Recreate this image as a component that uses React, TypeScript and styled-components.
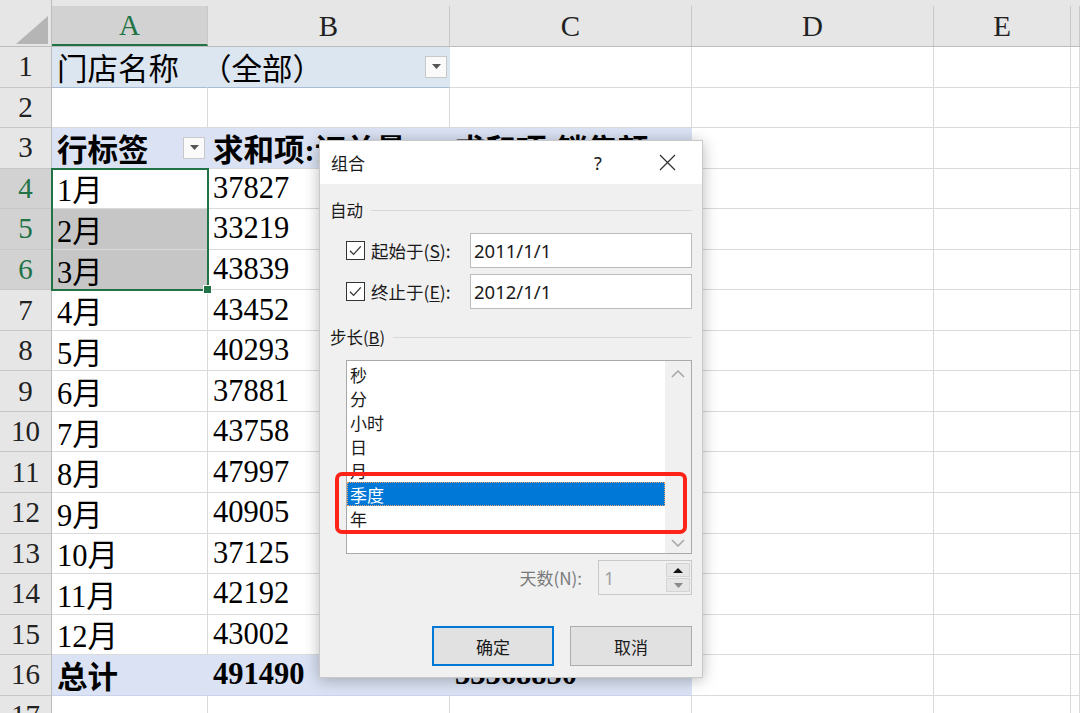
import React from "react";
import styled, { createGlobalStyle } from "styled-components";

const GlobalStyle = createGlobalStyle`
  html, body { margin: 0; padding: 0; background: #fff; overflow: hidden; }
  body { width: 1080px; height: 713px; }
`;

const COLS = [156, 242, 242, 242, 137, 9];
const LETTERS = ["A", "B", "C", "D", "E", ""];

const months = [
  ["1月", "37827"], ["2月", "33219"], ["3月", "43839"], ["4月", "43452"],
  ["5月", "40293"], ["6月", "37881"], ["7月", "43758"], ["8月", "47997"],
  ["9月", "40905"], ["10月", "37125"], ["11月", "42192"], ["12月", "43002"],
];

const Page = styled.div`
  position: relative;
  width: 1080px;
  height: 713px;
  overflow: hidden;
  font-family: "Liberation Serif", "Noto Sans CJK SC", serif;
  color: #000;
`;

const Sheet = styled.div`
  display: flex;
  flex-direction: column;
`;

const HeadRow = styled.div`
  display: flex;
  height: 47px;
  flex-shrink: 0;
  background: #e6e6e6;
  box-sizing: border-box;
  border-bottom: 1px solid #bdbdbd;
`;

const Corner = styled.div`
  width: 52px;
  flex-shrink: 0;
  display: flex;
  align-items: flex-end;
  justify-content: flex-end;
  padding: 0 3px 2px 0;
  box-sizing: border-box;
  border-right: 1px solid #bdbdbd;
`;

const ColHead = styled.div<{ $w: number; $active?: boolean }>`
  width: ${(p) => p.$w}px;
  flex-shrink: 0;
  height: 40px;
  align-self: flex-end;
  box-sizing: border-box;
  display: flex;
  align-items: center;
  justify-content: center;
  font-size: 29px;
  border-right: 1px solid #c8c8c8;
  background: ${(p) => (p.$active ? "#d2d2d2" : "transparent")};
  color: ${(p) => (p.$active ? "#217346" : "#222")};
  border-bottom: ${(p) => (p.$active ? "2px solid #217346" : "none")};
`;

const Row = styled.div`
  display: flex;
  height: 40.55px;
  flex-shrink: 0;
`;

const RowHead = styled.div<{ $active?: boolean }>`
  width: 52px;
  flex-shrink: 0;
  box-sizing: border-box;
  display: flex;
  align-items: center;
  justify-content: center;
  font-size: 29px;
  background: ${(p) => (p.$active ? "#d2d2d2" : "#e6e6e6")};
  color: ${(p) => (p.$active ? "#217346" : "#222")};
  border-right: 1px solid #bdbdbd;
  border-bottom: 1px solid #c6c6c6;
`;

const Cell = styled.div<{ $w: number; $bg?: string; $bold?: boolean; $line?: string }>`
  width: ${(p) => p.$w}px;
  flex-shrink: 0;
  box-sizing: border-box;
  display: flex;
  align-items: center;
  justify-content: space-between;
  padding: 0 2px 0 5px;
  font-size: 30.5px;
  font-weight: ${(p) => (p.$bold ? 700 : 400)};
  white-space: nowrap;
  overflow: visible;
  background: ${(p) => p.$bg ?? "#fff"};
  border-right: 1px solid ${(p) => (p.$bg ? p.$bg : "#dadada")};
  border-bottom: 1px solid ${(p) => p.$line ?? "#dadada"};
  position: relative;
`;

/* full-width bracket carries its own left bearing; pull it back to the cell edge */
const FilterValue = styled.span`
  margin-left: -12px;
`;

const DropBtn = styled.div`
  width: 22px;
  height: 22px;
  flex-shrink: 0;
  box-sizing: border-box;
  background: #fafafa;
  border: 1px solid #c8c8c8;
  display: flex;
  align-items: center;
  justify-content: center;
`;

const Selection = styled.div`
  position: absolute;
  left: 51px;
  top: 168px;
  width: 158px;
  height: 123px;
  box-sizing: border-box;
  border: 2px solid #217346;
  pointer-events: none;
`;

const FillHandle = styled.div`
  position: absolute;
  right: -5px;
  bottom: -5px;
  width: 7px;
  height: 7px;
  background: #217346;
  border: 1px solid #fff;
`;

/* dialog */
const Dialog = styled.div`
  position: absolute;
  left: 319px;
  top: 140px;
  width: 384px;
  height: 538px;
  box-sizing: border-box;
  background: #f0f0f0;
  border: 1px solid #c9c9c9;
  box-shadow: 0 2px 14px rgba(0, 0, 0, 0.28);
  display: flex;
  flex-direction: column;
  font-family: "Noto Sans CJK SC", "Noto Sans", sans-serif;
  color: #1a1a1a;
`;

const TitleBar = styled.div`
  height: 43px;
  flex-shrink: 0;
  background: #fff;
  display: flex;
  align-items: center;
  padding: 0 0 0 11px;
  font-size: 17px;
`;

const Title = styled.div`
  flex: 1;
`;

const Help = styled.div`
  width: 40px;
  text-align: center;
  font-family: "Noto Sans", sans-serif;
  font-size: 18px;
  margin-right: 19px;
`;

const Close = styled.div`
  width: 60px;
  display: flex;
  justify-content: center;
  margin-right: 5px;
`;

const Body = styled.div`
  position: relative;
  display: flex;
  flex-direction: column;
  padding: 0 10px 0 10px;
  flex: 1;
`;

const GroupHead = styled.div<{ $mt: number }>`
  display: flex;
  align-items: center;
  gap: 8px;
  height: 20px;
  margin-top: ${(p) => p.$mt}px;
  font-size: 16.5px;
  &::after {
    content: "";
    flex: 1;
    height: 1px;
    background: #d8d8d8;
  }
`;

const CheckRow = styled.div<{ $mt: number }>`
  display: flex;
  align-items: center;
  height: 35px;
  margin-top: ${(p) => p.$mt}px;
  padding-left: 16px;
`;

const CheckLabel = styled.label`
  display: flex;
  align-items: center;
  gap: 6px;
  width: 124px;
  font-size: 17.5px;
  u { text-underline-offset: 2px; }
`;

const TextInput = styled.div`
  width: 222px;
  height: 35px;
  box-sizing: border-box;
  background: #fff;
  border: 1px solid #bcbcbc;
  display: flex;
  align-items: center;
  padding-left: 3px;
  font-family: "Noto Sans", sans-serif;
  font-size: 18.5px;
`;

const ListBox = styled.div`
  margin: 13px 0 0 16px;
  width: 346px;
  height: 194px;
  box-sizing: border-box;
  background: #fff;
  border: 1px solid #a9a9a9;
  display: flex;
`;

const Items = styled.div`
  flex: 1;
  padding-top: 1px;
  display: flex;
  flex-direction: column;
`;

const Item = styled.div<{ $sel?: boolean }>`
  height: 24px;
  display: flex;
  align-items: center;
  padding-left: 3px;
  font-size: 17px;
  background: ${(p) => (p.$sel ? "#0078d7" : "transparent")};
  color: ${(p) => (p.$sel ? "#fff" : "#1a1a1a")};
  outline: ${(p) => (p.$sel ? "1px dotted #f5a060" : "none")};
  outline-offset: -1px;
`;

const ScrollBar = styled.div`
  width: 26px;
  background: #f0f0f0;
  display: flex;
  flex-direction: column;
  justify-content: space-between;
  align-items: center;
  padding: 9px 0 6px;
`;

const Highlight = styled.div`
  position: absolute;
  left: 15px;
  top: 288px;
  width: 352px;
  height: 62px;
  box-sizing: border-box;
  border: 4px solid #fe2318;
  border-radius: 7px;
  pointer-events: none;
`;

const DaysRow = styled.div`
  display: flex;
  justify-content: flex-end;
  align-items: center;
  gap: 16px;
  margin-top: 6px;
  height: 35px;
  font-size: 17px;
  color: #7a7a7a;
`;

const Spinner = styled.div`
  width: 94px;
  height: 35px;
  box-sizing: border-box;
  border: 1px solid #c8c8c8;
  background: #f0f0f0;
  display: flex;
  align-items: stretch;
`;

const SpinValue = styled.div`
  flex: 1;
  display: flex;
  align-items: center;
  padding-left: 5px;
  font-family: "Noto Sans", sans-serif;
  font-size: 18px;
  color: #a0a0a0;
`;

const SpinBtns = styled.div`
  width: 24px;
  display: flex;
  flex-direction: column;
  padding: 2px 1px 2px 0;
  gap: 1px;
`;

const SpinBtn = styled.div`
  flex: 1;
  background: #e6e6e6;
  border: 1px solid #d4d4d4;
  display: flex;
  align-items: center;
  justify-content: center;
`;

const Buttons = styled.div`
  display: flex;
  justify-content: flex-end;
  gap: 16px;
  margin-top: 31px;
`;

const Button = styled.div<{ $primary?: boolean }>`
  width: 122px;
  height: 40px;
  box-sizing: border-box;
  background: #e1e1e1;
  border: ${(p) => (p.$primary ? "2px solid #0078d7" : "1px solid #adadad")};
  display: flex;
  align-items: center;
  justify-content: center;
  font-size: 17px;
`;

const Tri = ({ color = "#555" }: { color?: string }) => (
  <svg width="9" height="5" viewBox="0 0 9 5">
    <path d="M0 0 H9 L4.5 5 Z" fill={color} />
  </svg>
);

const CheckIcon = () => (
  <svg width="19" height="19" viewBox="0 0 19 19">
    <rect x="0.5" y="0.5" width="18" height="18" fill="#fff" stroke="#333" />
    <path d="M4 9.8 L7.6 13.4 L14.8 5.4" fill="none" stroke="#333" strokeWidth="1.3" />
  </svg>
);

const Chevron = ({ up }: { up?: boolean }) => (
  <svg width="14" height="8" viewBox="0 0 14 8">
    <path d={up ? "M1 7 L7 1 L13 7" : "M1 1 L7 7 L13 1"} fill="none" stroke="#a8a8a8" strokeWidth="1.6" />
  </svg>
);

const Sheet1 = () => {
  const band1 = "#dce6f1";
  const band3 = "#dae2f3";
  return (
    <Sheet>
      <HeadRow>
        <Corner>
          <svg width="32" height="28" viewBox="0 0 32 28">
            <path d="M32 0 V28 H0 Z" fill="#b5b5b5" />
          </svg>
        </Corner>
        {COLS.map((w, i) => (
          <ColHead key={i} $w={w} $active={i === 0}>
            {LETTERS[i]}
          </ColHead>
        ))}
      </HeadRow>

      <Row>
        <RowHead>1</RowHead>
        <Cell $w={COLS[0]} $bg={band1} $line="#aabbd5">门店名称</Cell>
        <Cell $w={COLS[1]} $bg={band1} $line="#aabbd5">
          <FilterValue>（全部）</FilterValue>
          <DropBtn><Tri /></DropBtn>
        </Cell>
        <Cell $w={COLS[2]} />
        <Cell $w={COLS[3]} />
        <Cell $w={COLS[4]} />
        <Cell $w={COLS[5]} />
      </Row>

      <Row>
        <RowHead>2</RowHead>
        {COLS.map((w, i) => (
          <Cell key={i} $w={w} />
        ))}
      </Row>

      <Row>
        <RowHead>3</RowHead>
        <Cell $w={COLS[0]} $bg={band3} $bold>
          行标签
          <DropBtn><Tri /></DropBtn>
        </Cell>
        <Cell $w={COLS[1]} $bg={band3} $bold>求和项:订单量</Cell>
        <Cell $w={COLS[2]} $bg={band3} $bold>求和项:销售额</Cell>
        <Cell $w={COLS[3]} />
        <Cell $w={COLS[4]} />
        <Cell $w={COLS[5]} />
      </Row>

      {months.map(([m, v], i) => {
        const r = i + 4;
        const active = r >= 4 && r <= 6;
        return (
          <Row key={m}>
            <RowHead $active={active}>{r}</RowHead>
            <Cell $w={COLS[0]} $bg={r === 5 || r === 6 ? "#c6c6c6" : undefined}>{m}</Cell>
            <Cell $w={COLS[1]}>{v}</Cell>
            <Cell $w={COLS[2]} />
            <Cell $w={COLS[3]} />
            <Cell $w={COLS[4]} />
            <Cell $w={COLS[5]} />
          </Row>
        );
      })}

      <Row>
        <RowHead>16</RowHead>
        <Cell $w={COLS[0]} $bg={band3} $bold $line="#c9d4ec">总计</Cell>
        <Cell $w={COLS[1]} $bg={band3} $bold $line="#c9d4ec">491490</Cell>
        <Cell $w={COLS[2]} $bg={band3} $bold $line="#c9d4ec">33368850</Cell>
        <Cell $w={COLS[3]} />
        <Cell $w={COLS[4]} />
        <Cell $w={COLS[5]} />
      </Row>

      <Row>
        <RowHead>17</RowHead>
        {COLS.map((w, i) => (
          <Cell key={i} $w={w} />
        ))}
      </Row>
    </Sheet>
  );
};

const GroupDialog = () => (
  <Dialog>
    <TitleBar>
      <Title>组合</Title>
      <Help>?</Help>
      <Close>
        <svg width="17" height="17" viewBox="0 0 17 17">
          <path d="M1 1 L16 16 M16 1 L1 16" stroke="#333" strokeWidth="1.3" />
        </svg>
      </Close>
    </TitleBar>
    <Body>
      <GroupHead $mt={16}>自动</GroupHead>
      <CheckRow $mt={13}>
        <CheckLabel>
          <CheckIcon />
          <span>起始于(<u>S</u>):</span>
        </CheckLabel>
        <TextInput>2011/1/1</TextInput>
      </CheckRow>
      <CheckRow $mt={6}>
        <CheckLabel>
          <CheckIcon />
          <span>终止于(<u>E</u>):</span>
        </CheckLabel>
        <TextInput>2012/1/1</TextInput>
      </CheckRow>

      <GroupHead $mt={18}>
        <span>步长(<u>B</u>)</span>
      </GroupHead>
      <ListBox>
        <Items>
          {["秒", "分", "小时", "日", "月", "季度", "年"].map((t) => (
            <Item key={t} $sel={t === "季度"}>{t}</Item>
          ))}
        </Items>
        <ScrollBar>
          <Chevron up />
          <Chevron />
        </ScrollBar>
      </ListBox>
      <Highlight />

      <DaysRow>
        <span>天数(N):</span>
        <Spinner>
          <SpinValue>1</SpinValue>
          <SpinBtns>
            <SpinBtn>
              <svg width="10" height="5" viewBox="0 0 10 5"><path d="M0 5 H10 L5 0 Z" fill="#111" /></svg>
            </SpinBtn>
            <SpinBtn>
              <Tri color="#8a8a8a" />
            </SpinBtn>
          </SpinBtns>
        </Spinner>
      </DaysRow>

      <Buttons>
        <Button $primary>确定</Button>
        <Button>取消</Button>
      </Buttons>
    </Body>
  </Dialog>
);

export default function App() {
  return (
    <Page>
      <GlobalStyle />
      <Sheet1 />
      <Selection>
        <FillHandle />
      </Selection>
      <GroupDialog />
    </Page>
  );
}
